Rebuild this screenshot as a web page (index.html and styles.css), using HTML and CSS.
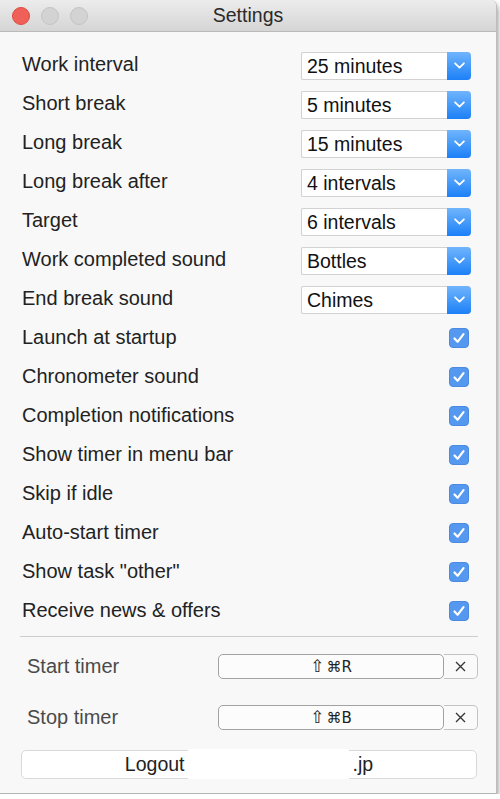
FILE: index.html
```html
<!DOCTYPE html>
<html lang="en">
<head>
    <meta charset="UTF-8">
    <meta name="viewport" content="width=device-width, initial-scale=1.0">
    <title>Settings</title>
    <link rel="stylesheet" href="styles.css">
</head>
<body>
    <div class="window">
        <header class="titlebar">
            <div class="lights">
                <span class="light close"></span>
                <span class="light"></span>
                <span class="light"></span>
            </div>
            <div class="title">Settings</div>
            <div></div>
        </header>

        <main class="content">
            <div class="settings">
                <div class="row">
                    <span class="label">Work interval</span>
                    <div class="select"><span class="value">25 minutes</span><span class="arrow"><svg width="10" height="6" viewBox="0 0 10 6"><polyline points="1,1 5,5 9,1" /></svg></span></div>
                </div>
                <div class="row">
                    <span class="label">Short break</span>
                    <div class="select"><span class="value">5 minutes</span><span class="arrow"><svg width="10" height="6" viewBox="0 0 10 6"><polyline points="1,1 5,5 9,1" /></svg></span></div>
                </div>
                <div class="row">
                    <span class="label">Long break</span>
                    <div class="select"><span class="value">15 minutes</span><span class="arrow"><svg width="10" height="6" viewBox="0 0 10 6"><polyline points="1,1 5,5 9,1" /></svg></span></div>
                </div>
                <div class="row">
                    <span class="label">Long break after</span>
                    <div class="select"><span class="value">4 intervals</span><span class="arrow"><svg width="10" height="6" viewBox="0 0 10 6"><polyline points="1,1 5,5 9,1" /></svg></span></div>
                </div>
                <div class="row">
                    <span class="label">Target</span>
                    <div class="select"><span class="value">6 intervals</span><span class="arrow"><svg width="10" height="6" viewBox="0 0 10 6"><polyline points="1,1 5,5 9,1" /></svg></span></div>
                </div>
                <div class="row">
                    <span class="label">Work completed sound</span>
                    <div class="select"><span class="value">Bottles</span><span class="arrow"><svg width="10" height="6" viewBox="0 0 10 6"><polyline points="1,1 5,5 9,1" /></svg></span></div>
                </div>
                <div class="row">
                    <span class="label">End break sound</span>
                    <div class="select"><span class="value">Chimes</span><span class="arrow"><svg width="10" height="6" viewBox="0 0 10 6"><polyline points="1,1 5,5 9,1" /></svg></span></div>
                </div>
                <div class="row">
                    <span class="label">Launch at startup</span>
                    <span class="checkbox"><svg width="20" height="20" viewBox="0 0 20 20"><polyline points="5.5,10.5 8.6,13.8 14.5,6.2" /></svg></span>
                </div>
                <div class="row">
                    <span class="label">Chronometer sound</span>
                    <span class="checkbox"><svg width="20" height="20" viewBox="0 0 20 20"><polyline points="5.5,10.5 8.6,13.8 14.5,6.2" /></svg></span>
                </div>
                <div class="row">
                    <span class="label">Completion notifications</span>
                    <span class="checkbox"><svg width="20" height="20" viewBox="0 0 20 20"><polyline points="5.5,10.5 8.6,13.8 14.5,6.2" /></svg></span>
                </div>
                <div class="row">
                    <span class="label">Show timer in menu bar</span>
                    <span class="checkbox"><svg width="20" height="20" viewBox="0 0 20 20"><polyline points="5.5,10.5 8.6,13.8 14.5,6.2" /></svg></span>
                </div>
                <div class="row">
                    <span class="label">Skip if idle</span>
                    <span class="checkbox"><svg width="20" height="20" viewBox="0 0 20 20"><polyline points="5.5,10.5 8.6,13.8 14.5,6.2" /></svg></span>
                </div>
                <div class="row">
                    <span class="label">Auto-start timer</span>
                    <span class="checkbox"><svg width="20" height="20" viewBox="0 0 20 20"><polyline points="5.5,10.5 8.6,13.8 14.5,6.2" /></svg></span>
                </div>
                <div class="row">
                    <span class="label">Show task "other"</span>
                    <span class="checkbox"><svg width="20" height="20" viewBox="0 0 20 20"><polyline points="5.5,10.5 8.6,13.8 14.5,6.2" /></svg></span>
                </div>
                <div class="row">
                    <span class="label">Receive news &amp; offers</span>
                    <span class="checkbox"><svg width="20" height="20" viewBox="0 0 20 20"><polyline points="5.5,10.5 8.6,13.8 14.5,6.2" /></svg></span>
                </div>
            </div>

            <hr class="separator">

            <div class="shortcuts">
                <div class="shortcut-row">
                    <span class="shortcut-label">Start timer</span>
                    <div class="shortcut">
                        <span class="keys"><span class="shift">⇧</span>⌘R</span>
                        <span class="clear"><svg width="11" height="11" viewBox="0 0 11 11"><path d="M1 1 L10 10 M10 1 L1 10" /></svg></span>
                    </div>
                </div>
                <div class="shortcut-row">
                    <span class="shortcut-label">Stop timer</span>
                    <div class="shortcut">
                        <span class="keys"><span class="shift">⇧</span>⌘B</span>
                        <span class="clear"><svg width="11" height="11" viewBox="0 0 11 11"><path d="M1 1 L10 10 M10 1 L1 10" /></svg></span>
                    </div>
                </div>
            </div>

            <button class="logout">Logout<span class="hidden-part"></span>.jp<span class="redact"></span></button>
        </main>
    </div>
</body>
</html>
```

FILE: styles.css
```css
/* --- Base --- */
body {
    margin: 0;
    background-color: #ffffff;
    font-family: "Liberation Sans", Arial, sans-serif;
}

/* --- Window frame --- */
.window {
    width: 496px;
    background-color: #f8f8f8;
    border-right: 1px solid #bdbdbd;
    border-bottom: 1px solid #b5b5b5;
    border-radius: 0 6px 0 0;
    box-shadow: 0 4px 6px rgba(0, 0, 0, 0.55);
    overflow: hidden;
}

.titlebar {
    display: grid;
    grid-template-columns: 1fr auto 1fr;
    align-items: center;
    height: 31px;
    background: linear-gradient(#ececec, #d5d5d5);
    border-bottom: 1px solid #bababa;
}

.lights {
    display: flex;
    gap: 11px;
    padding-left: 12px;
}

.light {
    width: 16px;
    height: 16px;
    border-radius: 50%;
    background-color: #d3d3d3;
    border: 1px solid #c4c4c4;
}

.light.close {
    background-color: #ef6059;
    border-color: #dc4a42;
}

.title {
    font-size: 19.5px;
    color: #2a2a2a;
}

/* --- Content --- */
.content {
    padding: 13px 18px 14px 20px;
}

.row {
    display: flex;
    align-items: center;
    justify-content: space-between;
    height: 39px;
}

.label {
    padding-left: 2px;
    font-size: 20px;
    color: #222222;
}

.select {
    display: flex;
    box-sizing: border-box;
    width: 170px;
    height: 28px;
    margin-right: 7px;
    margin-top: 2px;
    background-color: #ffffff;
    border: 1px solid #d2d2d2;
    border-right: 0;
    border-radius: 2px 4px 4px 2px;
}

.value {
    flex: 1;
    padding-left: 5px;
    font-size: 19.5px;
    line-height: 27px;
    color: #111111;
}

.arrow {
    display: flex;
    align-items: center;
    justify-content: center;
    width: 24px;
    margin: -1px 0;
    background: linear-gradient(#70b5fc, #1c80f7);
    border-radius: 0 4px 4px 0;
}

.arrow svg {
    width: 11px;
    height: 7px;
}

.arrow polyline {
    fill: none;
    stroke: #ffffff;
    stroke-width: 1.6;
    stroke-linecap: round;
    stroke-linejoin: round;
}

.checkbox {
    display: flex;
    box-sizing: border-box;
    width: 20px;
    height: 20px;
    margin-right: 9px;
    background-color: #5598f0;
    border: 1px solid #4a8ae0;
    border-radius: 4px;
    align-items: center;
    justify-content: center;
}

.checkbox svg {
    margin: -1px;
}

.checkbox polyline {
    fill: none;
    stroke: #ffffff;
    stroke-width: 2.2;
    stroke-linecap: round;
    stroke-linejoin: round;
}

.separator {
    margin: 6px 0 0 0;
    height: 0;
    border: 0;
    border-top: 1px solid #cdcdcd;
}

/* --- Keyboard shortcuts --- */
.shortcuts {
    padding-top: 4px;
}

.shortcut-row {
    display: flex;
    align-items: center;
    justify-content: space-between;
    height: 51px;
}

.shortcut-label {
    padding-left: 7px;
    font-size: 20px;
    color: #4a4a4a;
}

.shortcut {
    display: flex;
    height: 25px;
}

.keys {
    box-sizing: border-box;
    width: 226px;
    background-color: #fcfcfc;
    border: 1px solid #a2a2a2;
    border-radius: 5px;
    text-align: center;
    font-family: "DejaVu Sans", sans-serif;
    font-size: 15px;
    line-height: 23px;
    color: #222222;
}

.shift {
    font-size: 17px;
    margin-right: 2px;
}

.clear {
    display: flex;
    align-items: center;
    justify-content: center;
    box-sizing: border-box;
    width: 34px;
    background-color: #fafafa;
    border: 1px solid #c3c3c3;
    border-left: 0;
    border-radius: 0 5px 5px 0;
}

.clear path {
    fill: none;
    stroke: #333333;
    stroke-width: 1.3;
}

/* --- Logout --- */
.logout {
    position: relative;
    display: block;
    box-sizing: border-box;
    width: 456px;
    height: 29px;
    margin: 7px 0 0 1px;
    padding: 0;
    background-color: #ffffff;
    border: 1px solid #d9d9d9;
    border-radius: 5px;
    font-family: "Liberation Sans", Arial, sans-serif;
    font-size: 19.5px;
    color: #222222;
}

.hidden-part {
    display: inline-block;
    width: 168px;
}

.redact {
    position: absolute;
    left: 166px;
    top: -2px;
    bottom: -1px;
    width: 161px;
    background-color: #ffffff;
}
```
